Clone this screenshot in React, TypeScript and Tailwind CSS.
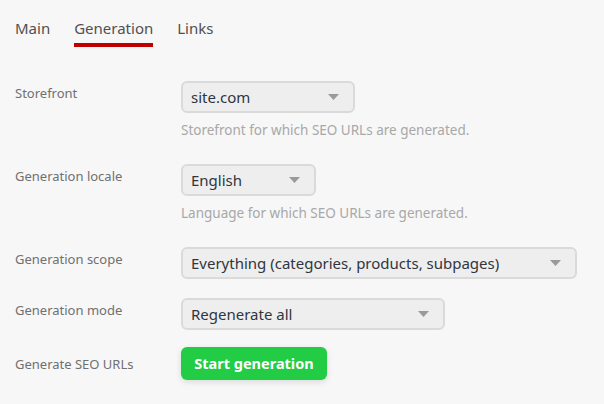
import React from 'react';

const font = { fontFamily: '"Noto Sans", "Open Sans", sans-serif' };

function Caret() {
  return (
    <svg width="11" height="6" viewBox="0 0 11 6" className="shrink-0" aria-hidden>
      <path d="M0 0h11L5.5 6z" fill="#9a9a9a" />
    </svg>
  );
}

interface SelectProps {
  value: string;
  width: string;
}

function FakeSelect({ value, width }: SelectProps) {
  return (
    <div
      className={`${width} h-[32px] flex items-center justify-between pl-[8px] pr-[14px] rounded-[6px] border-2 border-[#dadada] bg-[#eeeeee] text-[15px] text-[#2f3640]`}
    >
      <span className="truncate">{value}</span>
      <Caret />
    </div>
  );
}

function Row({ label, children, center }: { label: string; children: React.ReactNode; center?: boolean }) {
  return (
    <div className={`flex ${center ? 'items-center' : ''}`}>
      <div className={`w-[166px] shrink-0 ${center ? '' : 'pt-[2px]'} text-[13px] leading-[20px] text-[#707070]`}>
        {label}
      </div>
      <div className="flex flex-col">{children}</div>
    </div>
  );
}

function Help({ children }: { children: React.ReactNode }) {
  return <p className="mt-[9px] text-[13.5px] leading-[16px] text-[#a8a8a8]">{children}</p>;
}

export default function App() {
  const tabs = ['Main', 'Generation', 'Links'];
  return (
    <div style={font} className="w-[604px] h-[404px] bg-[#f7f7f7] px-[15px] overflow-hidden">
      <nav className="flex gap-[24px] pt-[16px]">
        {tabs.map((t) => (
          <div key={t} className="flex flex-col">
            <span className="text-[15px] leading-[24px] text-[#505050]">{t}</span>
            <span className={`mt-[3px] h-[4px] ${t === 'Generation' ? 'bg-[#c00000]' : 'bg-transparent'}`} />
          </div>
        ))}
      </nav>

      <div className="flex flex-col mt-[34px]">
        <Row label="Storefront">
          <FakeSelect value="site.com" width="w-[174px]" />
          <Help>Storefront for which SEO URLs are generated.</Help>
        </Row>
        <div className="mt-[26px]">
          <Row label="Generation locale">
            <FakeSelect value="English" width="w-[135px]" />
            <Help>Language for which SEO URLs are generated.</Help>
          </Row>
        </div>
        <div className="mt-[26px]">
          <Row label="Generation scope">
            <FakeSelect value="Everything (categories, products, subpages)" width="w-[396px]" />
          </Row>
        </div>
        <div className="mt-[19px]">
          <Row label="Generation mode">
            <FakeSelect value="Regenerate all" width="w-[264px]" />
          </Row>
        </div>
        <div className="mt-[17px]">
          <Row label="Generate SEO URLs" center>
            <button className="h-[33px] w-[146px] rounded-[6px] bg-[#22cc44] text-white text-[14.5px] font-bold shadow-[0_2px_6px_rgba(0,0,0,0.12)]">
              Start generation
            </button>
          </Row>
        </div>
      </div>
    </div>
  );
}
